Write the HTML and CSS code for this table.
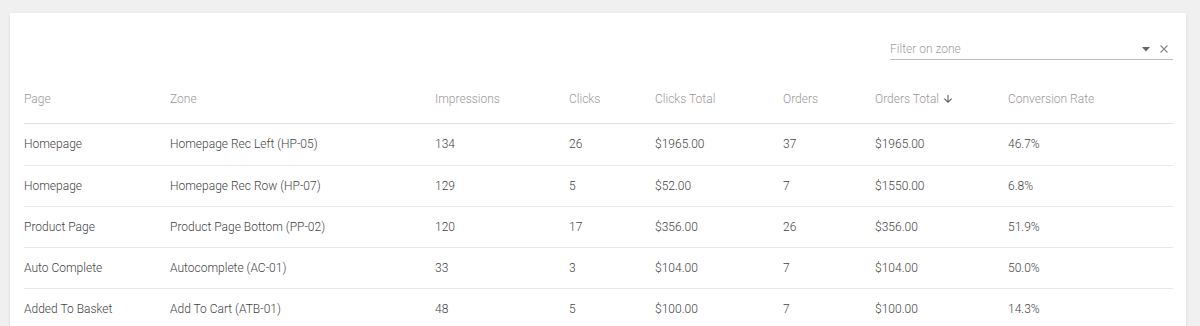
FILE: index.html
```html
<!DOCTYPE html>
<html>
<head>
<meta charset="utf-8">
<link rel="stylesheet" href="styles.css">
</head>
<body>
<div class="card">
  <div class="toolbar">
    <div class="filter">
      <span class="placeholder">Filter on zone</span>
      <span class="icons">
        <svg class="caret" width="10" height="10" viewBox="0 0 10 10"><path d="M1 3h8L5 7.5z" fill="#666"/></svg>
        <svg class="clear" width="10" height="10" viewBox="0 0 10 10"><path d="M1.5 1.5l7 7M8.5 1.5l-7 7" stroke="#888" stroke-width="1.1"/></svg>
      </span>
    </div>
  </div>
  <table class="grid">
    <colgroup>
      <col class="c-page"><col class="c-zone"><col class="c-imp"><col class="c-clicks"><col class="c-ctotal"><col class="c-orders"><col class="c-ototal"><col class="c-conv">
    </colgroup>
    <thead>
      <tr>
        <th>Page</th><th>Zone</th><th>Impressions</th><th>Clicks</th><th>Clicks Total</th><th>Orders</th>
        <th><span class="sorted">Orders Total<svg class="arrow" width="12" height="12" viewBox="0 0 24 24"><path d="M20 12l-1.41-1.41L13 16.17V4h-2v12.17l-5.58-5.59L4 12l8 8 8-8z" fill="#555"/></svg></span></th>
        <th>Conversion Rate</th>
      </tr>
    </thead>
    <tbody>
      <tr class="first"><td>Homepage</td><td>Homepage Rec Left (HP-05)</td><td>134</td><td>26</td><td>$1965.00</td><td>37</td><td>$1965.00</td><td>46.7%</td></tr>
      <tr><td>Homepage</td><td>Homepage Rec Row (HP-07)</td><td>129</td><td>5</td><td>$52.00</td><td>7</td><td>$1550.00</td><td>6.8%</td></tr>
      <tr><td>Product Page</td><td>Product Page Bottom (PP-02)</td><td>120</td><td>17</td><td>$356.00</td><td>26</td><td>$356.00</td><td>51.9%</td></tr>
      <tr><td>Auto Complete</td><td>Autocomplete (AC-01)</td><td>33</td><td>3</td><td>$104.00</td><td>7</td><td>$104.00</td><td>50.0%</td></tr>
      <tr><td>Added To Basket</td><td>Add To Cart (ATB-01)</td><td>48</td><td>5</td><td>$100.00</td><td>7</td><td>$100.00</td><td>14.3%</td></tr>
    </tbody>
  </table>
</div>
</body>
</html>
```
FILE: styles.css
```css
html, body {
  margin: 0;
  padding: 0;
  background: #f0f0f0;
  font-family: Roboto, "Liberation Sans", sans-serif;
  font-size: 12px;
  font-weight: 300;
  height: 326px;
  overflow: hidden;
}

.card {
  margin: 13px 14px 0 10px;
  background: #fff;
  padding: 0 13px 0 14px;
  box-shadow: 0 1px 3px rgba(0, 0, 0, 0.10);
  height: 320px;
}

.toolbar {
  display: flex;
  justify-content: flex-end;
  padding-top: 26px;
}

.filter {
  width: 283px;
  display: flex;
  align-items: center;
  justify-content: space-between;
  border-bottom: 1px solid #bdbdbd;
  height: 20px;
}

.placeholder {
  color: #9e9e9e;
  font-size: 12px;
}

.icons {
  display: flex;
  align-items: center;
  gap: 8px;
  padding-right: 4px;
}

.grid {
  width: 100%;
  border-collapse: collapse;
  table-layout: fixed;
}

.c-page { width: 146px; }
.c-zone { width: 265px; }
.c-imp { width: 134px; }
.c-clicks { width: 86px; }
.c-ctotal { width: 128px; }
.c-orders { width: 92px; }
.c-ototal { width: 133px; }

.grid th {
  text-align: left;
  font-weight: 300;
  color: #999;
  height: 63px;
  vertical-align: bottom;
  padding: 0 0 16px 0;
  border-bottom: 1px solid #e0e0e0;
  line-height: 16px;
  box-sizing: border-box;
}

.sorted {
  display: inline-flex;
  align-items: center;
  gap: 3px;
}

.arrow {
  display: block;
}

.grid td {
  color: #444;
  height: 40px;
  padding: 0;
  border-bottom: 1px solid #e8e8e8;
  line-height: 16px;
  vertical-align: middle;
}

.grid tr.first td {
  height: 41px;
}
```
